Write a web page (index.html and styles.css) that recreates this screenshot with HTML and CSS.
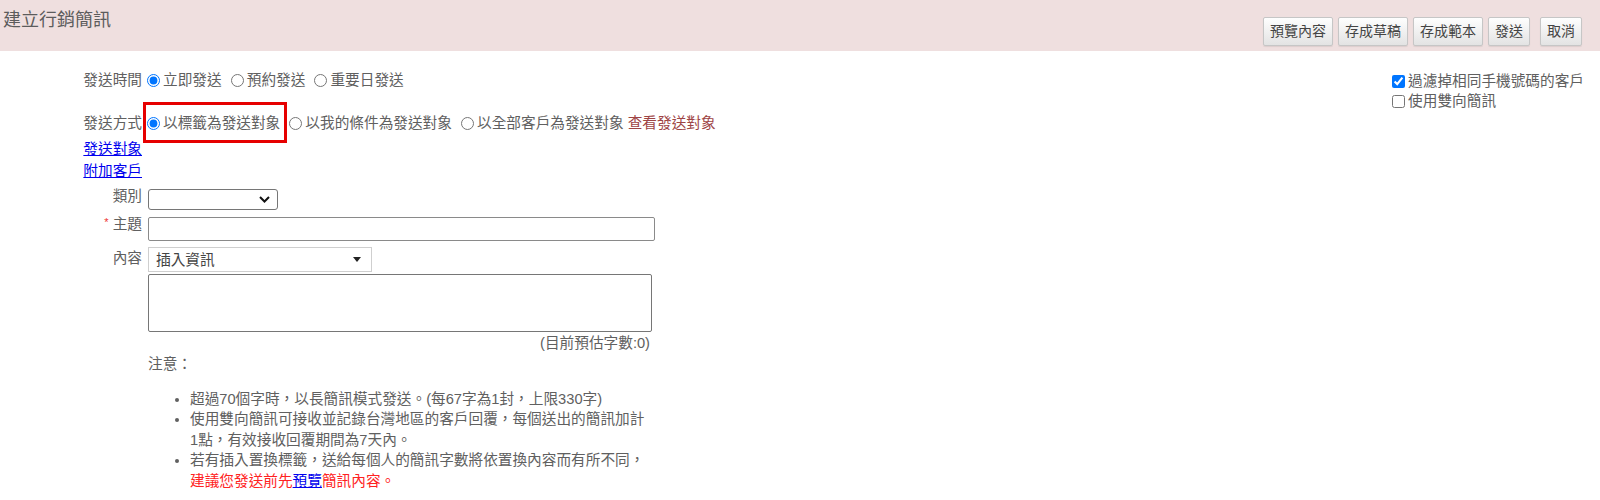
FILE: index.html
```html
<!DOCTYPE html>
<html lang="zh-Hant">
<head>
<meta charset="utf-8">
<title>建立行銷簡訊</title>
<link rel="stylesheet" href="styles.css">
</head>
<body>
<header class="topbar">
  <h1 class="title">建立行銷簡訊</h1>
  <div class="actions">
    <button class="btn" type="button">預覽內容</button>
    <button class="btn" type="button">存成草稿</button>
    <button class="btn" type="button">存成範本</button>
    <button class="btn" type="button">發送</button>
    <button class="btn btn-cancel" type="button">取消</button>
  </div>
</header>
<main class="page">
  <div class="form">
    <div class="row row-time">
      <div class="label">發送時間</div>
      <div class="field">
        <label class="opt"><input type="radio" name="time" checked>立即發送</label>
        <label class="opt"><input type="radio" name="time">預約發送</label>
        <label class="opt"><input type="radio" name="time">重要日發送</label>
      </div>
    </div>
    <div class="row row-mode">
      <div class="label">發送方式</div>
      <div class="field">
        <label class="opt hl"><input type="radio" name="mode" checked>以標籤為發送對象</label>
        <label class="opt"><input type="radio" name="mode">以我的條件為發送對象</label>
        <label class="opt"><input type="radio" name="mode">以全部客戶為發送對象</label>
        <span class="view">查看發送對象</span>
      </div>
    </div>
    <div class="row row-link row-link-first">
      <div class="label"><a href="#">發送對象</a></div>
    </div>
    <div class="row row-link">
      <div class="label"><a href="#">附加客戶</a></div>
    </div>
    <div class="row row-cat">
      <div class="label">類別</div>
      <div class="field">
        <div class="select-wrap">
          <select class="sel"><option></option></select>
          <svg class="chev" width="11" height="7" viewBox="0 0 11 7"><path d="M1 1 L5.5 5.5 L10 1" fill="none" stroke="#111" stroke-width="2"/></svg>
        </div>
      </div>
    </div>
    <div class="row row-subj">
      <div class="label"><span class="req">*</span> 主題</div>
      <div class="field">
        <input class="txt" type="text">
      </div>
    </div>
    <div class="row row-content">
      <div class="label label-content">內容</div>
      <div class="field">
        <div class="insert"><span>插入資訊</span><span class="caret"></span></div>
      </div>
    </div>
    <div class="row row-area">
      <div class="label"></div>
      <div class="field">
        <textarea class="area"></textarea>
        <div class="counter">(目前預估字數:0)</div>
        <div class="note-title">注意：</div>
        <ul class="notes">
          <li>超過70個字時，以長簡訊模式發送。(每67字為1封，上限330字)</li>
          <li>使用雙向簡訊可接收並記錄台灣地區的客戶回覆，每個送出的簡訊加計1點，有效接收回覆期間為7天內。</li>
          <li>若有插入置換標籤，送給每個人的簡訊字數將依置換內容而有所不同，<br><span class="warn">建議您發送前先<a href="#">預覽</a>簡訊內容。</span></li>
        </ul>
      </div>
    </div>
  </div>
  <div class="side">
    <label class="chk"><input type="checkbox" checked>過濾掉相同手機號碼的客戶</label>
    <label class="chk"><input type="checkbox">使用雙向簡訊</label>
  </div>
</main>
</body>
</html>
```
FILE: styles.css
```css
* { box-sizing: border-box; }

body {
  margin: 0;
  font-family: Arial, "Liberation Sans", "Noto Sans CJK TC", sans-serif;
  font-size: 14.667px;
  color: #606060;
  background: #fff;
}

a { color: #0000ee; text-decoration: underline; }

.topbar {
  height: 51px;
  background: #efdfdf;
  display: flex;
  justify-content: space-between;
  align-items: flex-start;
  padding: 0 18px 0 3px;
}

.title {
  margin: 0;
  padding-top: 8px;
  height: 32px;
  font-size: 18px;
  font-weight: normal;
  line-height: 24px;
  color: #5c5c5c;
}

.actions {
  display: flex;
  gap: 5px;
  margin-top: 17px;
}

.btn {
  font-family: inherit;
  font-size: 14px;
  height: 29px;
  line-height: 27px;
  padding: 0 6px;
  border: 1px solid #c6c6c6;
  border-radius: 2px;
  background: linear-gradient(#fefefe, #e3e3e3);
  color: #444;
  box-shadow: 0 1px 1px rgba(0,0,0,0.08);
}

.btn-cancel { margin-left: 5px; }

.page {
  display: flex;
  justify-content: space-between;
  align-items: flex-start;
}

.form { width: 740px; }

.row {
  display: flex;
  align-items: flex-start;
}

.label {
  width: 142px;
  flex: none;
  text-align: right;
  line-height: 20px;
  height: 20px;
  white-space: nowrap;
}

.field { flex: none; }

.row-time { margin-top: 19px; height: 20px; line-height: 20px; }
.row-time .field { height: 20px; }

.row-mode { margin-top: 22px; height: 22px; }
.row-mode .label { line-height: 22px; height: 22px; }
.row-mode .field { line-height: 22px; height: 22px; white-space: nowrap; }

.opt {
  display: inline-flex;
  align-items: center;
  white-space: nowrap;
  vertical-align: top;
}

.opt input {
  width: 13px;
  height: 13px;
  margin: 0 3px 0 5px;
}

.hl { position: relative; }
.hl::after {
  content: "";
  position: absolute;
  left: 1px;
  right: -7px;
  top: -10px;
  bottom: -9px;
  border: 3px solid #e60000;
  pointer-events: none;
}

.view { color: #9e4444; vertical-align: top; }

.row-link { height: 22px; }
.row-link .label { line-height: 22px; height: 22px; }
.row-link-first { margin-top: 4px; }

.row-cat { margin-top: 4px; height: 24px; }

.select-wrap {
  position: relative;
  margin: 3px 0 0 6px;
  width: 130px;
  height: 21px;
}

.sel {
  appearance: none;
  -webkit-appearance: none;
  display: block;
  width: 130px;
  height: 21px;
  border: 1px solid #767676;
  border-radius: 3px;
  background: #fff;
  margin: 0;
}

.chev {
  position: absolute;
  right: 8px;
  top: 7px;
  pointer-events: none;
}

.row-subj { margin-top: 4px; height: 27px; }

.req {
  color: #e33;
  font-size: 11px;
  vertical-align: top;
  line-height: 16px;
}

.txt {
  display: block;
  margin: 3px 0 0 6px;
  width: 507px;
  height: 24px;
  border: 1px solid #8a8a8a;
  border-radius: 2px;
  font: inherit;
}

.row-content { margin-top: 6px; height: 25px; }
.label-content { padding-top: 1px; height: 21px; }

.insert {
  margin-left: 6px;
  width: 224px;
  height: 25px;
  border: 1px solid #cfcfcf;
  display: flex;
  align-items: center;
  justify-content: space-between;
  padding: 0 10px 0 7px;
  color: #444;
  line-height: 20px;
}

.caret {
  width: 0;
  height: 0;
  border-style: solid;
  border-width: 5px 4px 0 4px;
  border-color: #222 transparent transparent transparent;
}

.row-area { margin-top: 2px; }

.area {
  display: block;
  margin-left: 6px;
  width: 504px;
  height: 58px;
  border: 1px solid #767676;
  border-radius: 2px;
  resize: none;
  font: inherit;
}

.counter {
  margin-left: 6px;
  width: 504px;
  height: 18px;
  padding-top: 4px;
  text-align: right;
  padding-right: 2px;
  line-height: 14px;
}

.note-title {
  margin: 4px 0 0 6px;
  line-height: 20px;
  height: 20px;
}

.notes {
  margin: 15px 0 0 8px;
  padding-left: 40px;
  width: 502px;
  line-height: 20.4px;
}

.notes li { min-height: 20.4px; }

.warn { color: #f22; }

.side {
  margin-top: 20px;
  margin-right: 16px;
  display: flex;
  flex-direction: column;
}

.chk {
  display: flex;
  align-items: center;
  line-height: 20px;
  height: 20px;
  white-space: nowrap;
}

.chk input {
  width: 13px;
  height: 13px;
  margin: 0 3px 0 4px;
}
```
